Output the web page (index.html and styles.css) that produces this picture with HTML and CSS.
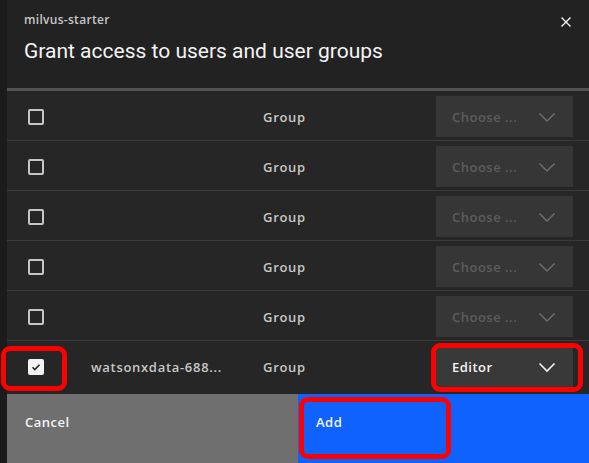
FILE: index.html
```html
<!DOCTYPE html>
<html lang="en">
<head>
<meta charset="utf-8">
<title>Grant access</title>
<link rel="stylesheet" href="styles.css">
</head>
<body>
<div class="modal">
  <header class="head">
    <div class="label">milvus-starter</div>
    <h1 class="title">Grant access to users and user groups</h1>
    <button class="close" aria-label="Close">
      <svg width="16" height="16" viewBox="0 0 16 16"><path d="M3.5 3.5l9 9M12.5 3.5l-9 9" stroke="#f4f4f4" stroke-width="1.4" fill="none"/></svg>
    </button>
  </header>
  <div class="list">
    <div class="row">
      <span class="cb"></span><span class="name"></span><span class="type">Group</span>
      <div class="dd off"><span>Choose ...</span><svg width="20" height="20" viewBox="0 0 20 20"><path d="M2.5 6.5l7.5 7.5 7.5-7.5" stroke="#6f6f6f" stroke-width="1.4" fill="none"/></svg></div>
    </div>
    <div class="row">
      <span class="cb"></span><span class="name"></span><span class="type">Group</span>
      <div class="dd off"><span>Choose ...</span><svg width="20" height="20" viewBox="0 0 20 20"><path d="M2.5 6.5l7.5 7.5 7.5-7.5" stroke="#6f6f6f" stroke-width="1.4" fill="none"/></svg></div>
    </div>
    <div class="row">
      <span class="cb"></span><span class="name"></span><span class="type">Group</span>
      <div class="dd off"><span>Choose ...</span><svg width="20" height="20" viewBox="0 0 20 20"><path d="M2.5 6.5l7.5 7.5 7.5-7.5" stroke="#6f6f6f" stroke-width="1.4" fill="none"/></svg></div>
    </div>
    <div class="row">
      <span class="cb"></span><span class="name"></span><span class="type">Group</span>
      <div class="dd off"><span>Choose ...</span><svg width="20" height="20" viewBox="0 0 20 20"><path d="M2.5 6.5l7.5 7.5 7.5-7.5" stroke="#6f6f6f" stroke-width="1.4" fill="none"/></svg></div>
    </div>
    <div class="row">
      <span class="cb"></span><span class="name"></span><span class="type">Group</span>
      <div class="dd off"><span>Choose ...</span><svg width="20" height="20" viewBox="0 0 20 20"><path d="M2.5 6.5l7.5 7.5 7.5-7.5" stroke="#6f6f6f" stroke-width="1.4" fill="none"/></svg></div>
    </div>
    <div class="row last">
      <span class="cb on"><svg width="12" height="12" viewBox="0 0 12 12"><path d="M2.5 6.2l2.3 2.3 4.7-4.8" stroke="#262626" stroke-width="1.6" fill="none"/></svg></span>
      <span class="name">watsonxdata-688...</span><span class="type">Group</span>
      <div class="dd"><span>Editor</span><svg width="20" height="20" viewBox="0 0 20 20"><path d="M2.5 6.5l7.5 7.5 7.5-7.5" stroke="#f4f4f4" stroke-width="1.6" fill="none"/></svg></div>
    </div>
  </div>
  <footer class="foot">
    <button class="btn cancel">Cancel</button>
    <button class="btn add">Add</button>
  </footer>
</div>
<div class="mark mark-cb"></div>
<div class="mark mark-dd"></div>
<div class="mark mark-add"></div>
</body>
</html>
```
FILE: styles.css
```css
html, body {
  margin: 0;
  padding: 0;
}
body {
  position: relative;
  width: 589px;
  height: 463px;
  overflow: hidden;
  background: #1b1b1b;
  font-family: "Open Sans", "Liberation Sans", sans-serif;
  color: #f4f4f4;
}
.modal {
  margin-left: 7px;
  height: 463px;
  background: #262626;
  display: flex;
  flex-direction: column;
}
.head {
  position: relative;
  height: 91px;
  box-sizing: border-box;
  padding: 11px 16px 0 17px;
  border-bottom: 3px solid #525252;
  background: #222222;
}
.label {
  font-size: 12px;
  font-weight: 600;
  color: #c6c6c6;
  line-height: 18px;
  letter-spacing: 0.3px;
}
.title {
  margin: 9px 0 0;
  font-family: Roboto, "Liberation Sans", sans-serif;
  font-size: 21px;
  font-weight: 400;
  line-height: 26px;
  color: #f4f4f4;
}
.close {
  position: absolute;
  top: 12px;
  right: 13px;
  width: 20px;
  height: 20px;
  padding: 2px;
  border: 0;
  background: none;
}
.list {
  display: flex;
  flex-direction: column;
  padding-bottom: 3px;
}
.row {
  display: grid;
  grid-template-columns: 63px 172px 173px 137px;
  align-items: center;
  height: 50px;
  box-sizing: border-box;
  padding: 2px 0 0 21px;
  border-bottom: 1px solid #3a3a3a;
}
.row.last {
  border-bottom: 0;
}
.cb {
  width: 12px;
  height: 12px;
  border: 2px solid #c6c6c6;
  border-radius: 2px;
  display: flex;
  align-items: center;
  justify-content: center;
}
.cb.on {
  background: #f4f4f4;
  border-color: #f4f4f4;
}
.name, .type {
  font-size: 13px;
  font-weight: 600;
  color: #c6c6c6;
  letter-spacing: 0.7px;
}
.dd {
  height: 41px;
  background: #393939;
  display: flex;
  align-items: center;
  justify-content: space-between;
  padding: 0 16px;
  box-sizing: border-box;
  font-size: 13px;
  font-weight: 600;
  letter-spacing: 0.5px;
  color: #f4f4f4;
}
.dd.off {
  color: #5d5d5d;
  background: #363636;
}
.foot {
  flex: 1;
  display: grid;
  grid-template-columns: 1fr 1fr;
}
.btn {
  border: 0;
  margin: 0;
  text-align: left;
  align-self: stretch;
  padding: 19px 18px 0;
  display: flex;
  align-items: flex-start;
  font-family: "Open Sans", "Liberation Sans", sans-serif;
  font-size: 13px;
  font-weight: 600;
  color: #f4f4f4;
  letter-spacing: 0.5px;
}
.cancel {
  background: #6f6f6f;
}
.add {
  background: #0f62fe;
}
.mark {
  position: absolute;
  border: 5px solid #ff0000;
  border-radius: 9px;
  box-sizing: border-box;
}
.mark-cb {
  left: 1px;
  top: 346px;
  width: 66px;
  height: 45px;
}
.mark-dd {
  left: 431px;
  top: 343px;
  width: 152px;
  height: 49px;
}
.mark-add {
  left: 299px;
  top: 397px;
  width: 152px;
  height: 62px;
}
```
